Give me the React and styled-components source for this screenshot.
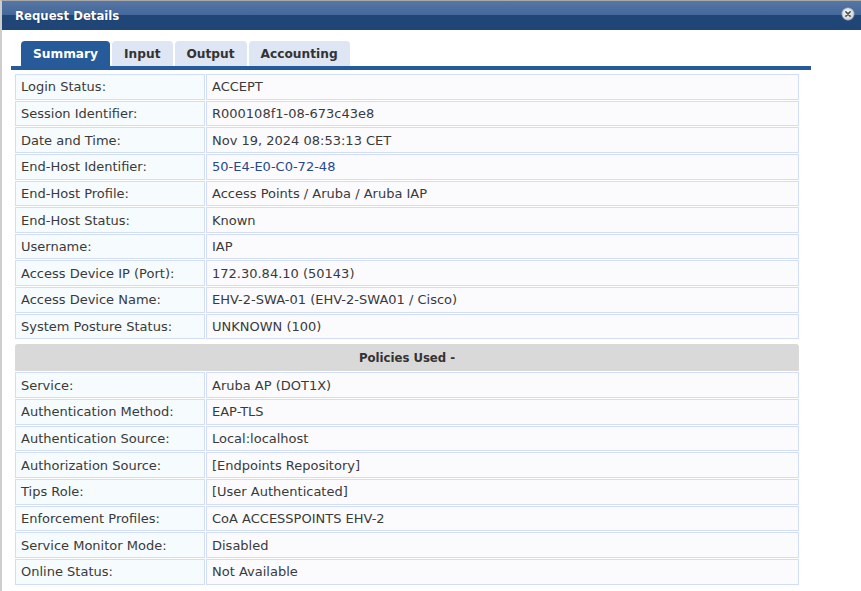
import React from "react";
import styled, { createGlobalStyle } from "styled-components";

const GlobalStyle = createGlobalStyle`
  html, body {
    margin: 0;
    padding: 0;
    background: #ffffff;
  }
  body {
    font-family: "DejaVu Sans", Verdana, sans-serif;
    color: #333333;
  }
`;

const summaryRows = [
  ["Login Status:", "ACCEPT"],
  ["Session Identifier:", "R000108f1-08-673c43e8"],
  ["Date and Time:", "Nov 19, 2024 08:53:13 CET"],
  ["End-Host Identifier:", "50-E4-E0-C0-72-48", true],
  ["End-Host Profile:", "Access Points / Aruba / Aruba IAP"],
  ["End-Host Status:", "Known"],
  ["Username:", "IAP"],
  ["Access Device IP (Port):", "172.30.84.10 (50143)"],
  ["Access Device Name:", "EHV-2-SWA-01 (EHV-2-SWA01 / Cisco)"],
  ["System Posture Status:", "UNKNOWN (100)"],
];

const policyRows = [
  ["Service:", "Aruba AP (DOT1X)"],
  ["Authentication Method:", "EAP-TLS"],
  ["Authentication Source:", "Local:localhost"],
  ["Authorization Source:", "[Endpoints Repository]"],
  ["Tips Role:", "[User Authenticated]"],
  ["Enforcement Profiles:", "CoA ACCESSPOINTS EHV-2"],
  ["Service Monitor Mode:", "Disabled"],
  ["Online Status:", "Not Available"],
];

const tabs = ["Summary", "Input", "Output", "Accounting"];

function CloseIcon() {
  return (
    <svg width="14" height="14" viewBox="0 0 14 14">
      <defs>
        <radialGradient id="closeGrad" cx="45%" cy="40%" r="60%">
          <stop offset="0%" stopColor="#ffffff" />
          <stop offset="100%" stopColor="#c9ccd2" />
        </radialGradient>
      </defs>
      <circle cx="7" cy="7" r="6.2" fill="url(#closeGrad)" stroke="#8f9aa9" strokeWidth="0.6" />
      <path d="M4.9 4.9 L9.1 9.1 M9.1 4.9 L4.9 9.1" stroke="#4a4a4a" strokeWidth="1.5" strokeLinecap="round" />
    </svg>
  );
}

export default function App() {
  return (
    <>
      <GlobalStyle />
      <Window>
        <TitleBar>
          <Title>Request Details</Title>
          <CloseButton>
            <CloseIcon />
          </CloseButton>
        </TitleBar>

        <Body>
          <TabStrip>
            {tabs.map((t, i) => (
              <Tab key={t} $active={i === 0}>
                {t}
              </Tab>
            ))}
          </TabStrip>
          <TabBar />

          <Table>
            {summaryRows.map(([label, value, link]) => (
              <Row key={label}>
                <LabelCell>{label}</LabelCell>
                <ValueCell $link={link}>{value}</ValueCell>
              </Row>
            ))}

            <SectionHeader>Policies Used -</SectionHeader>

            {policyRows.map(([label, value]) => (
              <Row key={label}>
                <LabelCell>{label}</LabelCell>
                <ValueCell>{value}</ValueCell>
              </Row>
            ))}
          </Table>
        </Body>
      </Window>
    </>
  );
}

const Window = styled.div`
  min-height: 100vh;
  box-sizing: border-box;
  border-top: 1px solid #a8a8a8;
  border-left: 2px solid #cdcdcd;
  background: #ffffff;
`;

const TitleBar = styled.div`
  height: 29px;
  display: flex;
  align-items: center;
  justify-content: space-between;
  padding: 0 6px 0 13px;
  background: linear-gradient(
    to bottom,
    #5676a4 0%,
    #43679a 50%,
    #1f4677 50%,
    #1f4677 100%
  );
`;

const Title = styled.div`
  font-family: "DejaVu Sans Condensed", "DejaVu Sans", sans-serif;
  font-stretch: condensed;
  font-weight: bold;
  font-size: 13px;
  color: #ffffff;
  text-shadow: 0 0 1px rgba(0, 0, 0, 0.4);
`;

const CloseButton = styled.div`
  display: flex;
  align-items: center;
  margin-top: -4px;
`;

const Body = styled.div`
  padding: 11px 0 0 9px;
`;

const TabStrip = styled.div`
  display: flex;
  gap: 2px;
  padding-left: 10px;
  align-items: flex-end;
`;

const Tab = styled.div`
  height: 25px;
  display: flex;
  align-items: center;
  padding: 0 12px;
  border-radius: 4px 4px 0 0;
  font-size: 12.2px;
  font-weight: bold;
  color: ${(p) => (p.$active ? "#ffffff" : "#333333")};
  background: ${(p) => (p.$active ? "#265a98" : "#dde6f2")};
`;

const TabBar = styled.div`
  width: 800px;
  height: 4px;
  background: #265a98;
`;

const Table = styled.div`
  width: 784px;
  margin: 4px 0 0 4px;
  display: flex;
  flex-direction: column;
  gap: 1px;
`;

const Row = styled.div`
  display: grid;
  grid-template-columns: 190px 1fr;
  column-gap: 1px;
  height: 25.65px;
`;

const Cell = styled.div`
  box-sizing: border-box;
  height: 100%;
  border: 1px solid #d2ddf7;
  display: flex;
  align-items: center;
  padding-left: 5px;
  font-size: 13px;
  white-space: nowrap;
`;

const LabelCell = styled(Cell)`
  background: #f6fbfd;
  color: #3a3a3a;
`;

const ValueCell = styled(Cell)`
  background: #fbfbfe;
  color: ${(p) => (p.$link ? "#27498c" : "#3a3a3a")};
`;

const SectionHeader = styled.div`
  height: 27px;
  margin: 4px 0 0;
  display: flex;
  align-items: center;
  justify-content: center;
  background: #d9d9d9;
  border-radius: 3px 3px 0 0;
  font-size: 13px;
  font-weight: bold;
  color: #333333;
  font-family: "DejaVu Sans Condensed", "DejaVu Sans", sans-serif;
  font-stretch: condensed;
`;
